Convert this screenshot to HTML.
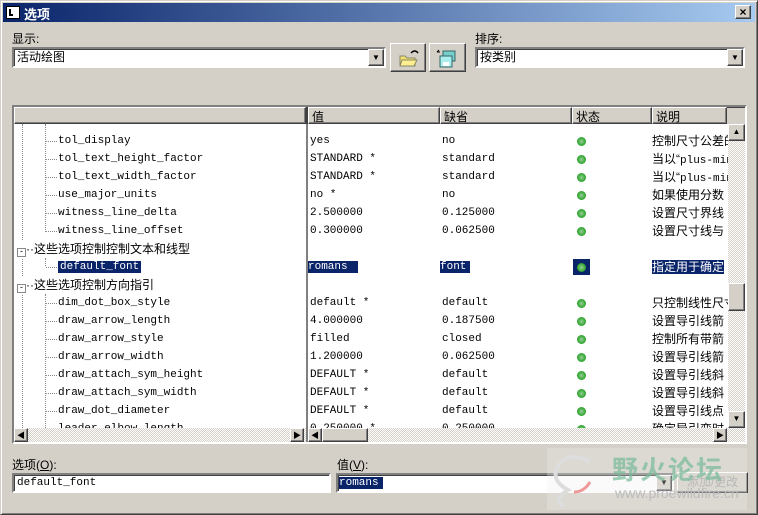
<!DOCTYPE html>
<html><head><meta charset="utf-8"><style>
*{box-sizing:border-box;margin:0;padding:0}
body{width:758px;height:515px;background:#d4d0c8;font-family:"Liberation Sans","Noto Sans CJK SC",sans-serif;font-size:12px;color:#000;position:relative;overflow:hidden}
.a{position:absolute}
.sunk{border:2px solid;border-color:#808080 #fff #fff #808080;box-shadow:inset 1px 1px 0 #404040;background:#fff}
.btn{border:1px solid;border-color:#fff #404040 #404040 #fff;box-shadow:inset -1px -1px 0 #808080;background:#d4d0c8}
.mono{font-family:"Liberation Mono","Noto Sans CJK SC",monospace;font-size:11px}
.row{position:absolute;left:0;height:18px;line-height:18px;white-space:nowrap}
.leaf{position:absolute;left:31px;height:18px;line-height:18px;white-space:nowrap;padding-left:13px}
.leaf::before{content:"";position:absolute;left:1px;top:9px;width:11px;border-top:1px dotted #888}
.dot{position:absolute;width:9px;height:9px;border-radius:50%;background:radial-gradient(circle,#9c9 0,#3a3 60%,#262 100%)}
.track{background:repeating-conic-gradient(#d4d0c8 0 25%,#fff 0 50%) 0 0/2px 2px}
.arr{font-size:8px;text-align:center;line-height:14px}
.box{display:inline-block;width:9px;height:9px;border:1px solid #888;background:#fff;line-height:5px;font-size:9px;text-align:center;vertical-align:-1px}
</style></head><body>
<div class="a" style="left:0;top:0;width:758px;height:515px;border:1px solid;border-color:#d4d0c8 #404040 #404040 #d4d0c8;box-shadow:inset 1px 1px 0 #fff,inset -1px -1px 0 #808080"></div>
<div class="a" style="left:3px;top:3px;width:752px;height:19px;background:linear-gradient(90deg,#0a246a,#a6caf0)"></div>
<div class="a" style="left:6px;top:6px;width:14px;height:13px;background:#fff;border:1px solid #000"><div class="a" style="left:2px;top:2px;width:4px;height:7px;border-left:2px solid #000;border-bottom:2px solid #000"></div></div>
<div class="a" style="left:24px;top:4px;color:#fff;font-weight:bold;font-size:13px">选项</div>
<div class="a btn" style="left:735px;top:5px;width:16px;height:14px;font-size:12px;line-height:12px;text-align:center;font-weight:bold">×</div>

<div class="a" style="left:12px;top:30px">显示:</div>
<div class="a sunk" style="left:12px;top:47px;width:374px;height:21px;padding-left:3px;line-height:16px">活动绘图</div>
<div class="a btn arr" style="left:368px;top:49px;width:16px;height:17px;line-height:16px">▼</div>
<div class="a btn" style="left:390px;top:43px;width:36px;height:29px"><svg width="34" height="27"><path d="M9 12h5l2 2h8v8H9z" fill="#f0e070" stroke="#886" stroke-width="1"/><path d="M11 16h15l-3 6H9z" fill="#ffef90" stroke="#886"/><path d="M20 9q4-4 7 0" fill="none" stroke="#000" stroke-width="1.5"/></svg></div>
<div class="a btn" style="left:429px;top:43px;width:37px;height:29px"><svg width="35" height="27"><rect x="13" y="7" width="12" height="10" fill="#7cc" stroke="#366"/><rect x="10" y="12" width="12" height="11" fill="#aee" stroke="#366"/><rect x="13" y="18" width="6" height="4" fill="#fff"/><path d="M10 8h-3m0 0l2-2" stroke="#000" fill="none"/></svg></div>
<div class="a" style="left:475px;top:30px">排序:</div>
<div class="a sunk" style="left:475px;top:47px;width:270px;height:21px;padding-left:3px;line-height:16px">按类别</div>
<div class="a btn arr" style="left:727px;top:49px;width:16px;height:17px;line-height:16px">▼</div>

<div class="a sunk" style="left:12px;top:105px;width:735px;height:339px;background:#d4d0c8"></div>
<div class="a" style="left:14px;top:107px;width:713px;height:17px;background:#d4d0c8">
 <div class="a btn" style="left:0;top:0;width:292px;height:17px"></div>
 <div class="a" style="left:292px;top:0;width:2px;height:17px;background:#404040"></div>
 <div class="a btn" style="left:294px;top:0;width:132px;height:17px;padding-left:3px">值</div>
 <div class="a btn" style="left:426px;top:0;width:132px;height:17px;padding-left:3px">缺省</div>
 <div class="a btn" style="left:558px;top:0;width:80px;height:17px;padding-left:3px">状态</div>
 <div class="a btn" style="left:638px;top:0;width:75px;height:17px;padding-left:3px">说明</div>
</div>
<div class="a" style="left:14px;top:124px;width:292px;height:304px;background:#fff;overflow:hidden">
 <div class="a" style="left:8px;top:0;height:304px;border-left:1px dotted #888"></div>
 <div class="a" style="left:31px;top:0;height:108px;border-left:1px dotted #888"></div>
 <div class="a" style="left:31px;top:134px;height:8px;border-left:1px dotted #888"></div>
 <div class="a" style="left:31px;top:170px;height:140px;border-left:1px dotted #888"></div>
 <div class="mono" style="position:absolute;left:0;top:8px;width:292px">
  <div class="leaf" style="top:0">tol_display</div>
  <div class="leaf" style="top:18px">tol_text_height_factor</div>
  <div class="leaf" style="top:36px">tol_text_width_factor</div>
  <div class="leaf" style="top:54px">use_major_units</div>
  <div class="leaf" style="top:72px">witness_line_delta</div>
  <div class="leaf" style="top:90px">witness_line_offset</div>
  <div class="row" style="top:108px;left:3px;font-family:'Liberation Sans','Noto Sans CJK SC',sans-serif;font-size:12px;background:#fff"><span class="box">-</span>··这些选项控制控制文本和线型</div>
  <div class="leaf" style="top:126px"><span style="background:#0a246a;color:#fff;padding:0 2px">default_font</span></div>
  <div class="row" style="top:144px;left:3px;font-family:'Liberation Sans','Noto Sans CJK SC',sans-serif;font-size:12px;background:#fff"><span class="box">-</span>··这些选项控制方向指引</div>
  <div class="leaf" style="top:162px">dim_dot_box_style</div>
  <div class="leaf" style="top:180px">draw_arrow_length</div>
  <div class="leaf" style="top:198px">draw_arrow_style</div>
  <div class="leaf" style="top:216px">draw_arrow_width</div>
  <div class="leaf" style="top:234px">draw_attach_sym_height</div>
  <div class="leaf" style="top:252px">draw_attach_sym_width</div>
  <div class="leaf" style="top:270px">draw_dot_diameter</div>
  <div class="leaf" style="top:288px">leader_elbow_length</div>
 </div>
</div>
<div class="a" style="left:306px;top:124px;width:2px;height:318px;background:#808080"></div>
<div class="a" style="left:308px;top:124px;width:420px;height:304px;background:#fff;overflow:hidden">
 <div class="mono" style="position:absolute;left:0;top:8px">
  <div class="row" style="top:0"><span class="a" style="left:2px">yes</span><span class="a" style="left:134px">no</span></div>
  <div class="row" style="top:18px"><span class="a" style="left:2px">STANDARD *</span><span class="a" style="left:134px">standard</span></div>
  <div class="row" style="top:36px"><span class="a" style="left:2px">STANDARD *</span><span class="a" style="left:134px">standard</span></div>
  <div class="row" style="top:54px"><span class="a" style="left:2px">no *</span><span class="a" style="left:134px">no</span></div>
  <div class="row" style="top:72px"><span class="a" style="left:2px">2.500000</span><span class="a" style="left:134px">0.125000</span></div>
  <div class="row" style="top:90px"><span class="a" style="left:2px">0.300000</span><span class="a" style="left:134px">0.062500</span></div>
  <div class="row" style="top:126px"><span class="a" style="left:0;background:#0a246a;color:#fff;width:50px;line-height:12px;top:3px">romans</span><span class="a" style="left:132px;background:#0a246a;color:#fff;width:30px;line-height:12px;top:3px">font</span></div>
  <div class="row" style="top:162px"><span class="a" style="left:2px">default *</span><span class="a" style="left:134px">default</span></div>
  <div class="row" style="top:180px"><span class="a" style="left:2px">4.000000</span><span class="a" style="left:134px">0.187500</span></div>
  <div class="row" style="top:198px"><span class="a" style="left:2px">filled</span><span class="a" style="left:134px">closed</span></div>
  <div class="row" style="top:216px"><span class="a" style="left:2px">1.200000</span><span class="a" style="left:134px">0.062500</span></div>
  <div class="row" style="top:234px"><span class="a" style="left:2px">DEFAULT *</span><span class="a" style="left:134px">default</span></div>
  <div class="row" style="top:252px"><span class="a" style="left:2px">DEFAULT *</span><span class="a" style="left:134px">default</span></div>
  <div class="row" style="top:270px"><span class="a" style="left:2px">DEFAULT *</span><span class="a" style="left:134px">default</span></div>
  <div class="row" style="top:288px"><span class="a" style="left:2px">0.250000 *</span><span class="a" style="left:134px">0.250000</span></div>
 </div>
 <div class="a" style="left:265px;top:135px;width:17px;height:16px;background:#0a246a"></div>
 <div class="dot" style="left:269px;top:13px"></div><div class="dot" style="left:269px;top:31px"></div><div class="dot" style="left:269px;top:49px"></div><div class="dot" style="left:269px;top:67px"></div><div class="dot" style="left:269px;top:85px"></div><div class="dot" style="left:269px;top:103px"></div><div class="dot" style="left:269px;top:139px"></div><div class="dot" style="left:269px;top:175px"></div><div class="dot" style="left:269px;top:193px"></div><div class="dot" style="left:269px;top:211px"></div><div class="dot" style="left:269px;top:229px"></div><div class="dot" style="left:269px;top:247px"></div><div class="dot" style="left:269px;top:265px"></div><div class="dot" style="left:269px;top:283px"></div><div class="dot" style="left:269px;top:301px"></div>
 <div style="position:absolute;left:344px;top:8px;font-size:12px;white-space:nowrap">
  <div class="row" style="top:0">控制尺寸公差的</div>
  <div class="row" style="top:18px">当以“<span class="mono">plus-minus</span></div>
  <div class="row" style="top:36px">当以“<span class="mono">plus-minus</span></div>
  <div class="row" style="top:54px">如果使用分数</div>
  <div class="row" style="top:72px">设置尺寸界线</div>
  <div class="row" style="top:90px">设置尺寸线与</div>
  <div class="row" style="top:126px"><span style="background:#0a246a;color:#fff">指定用于确定</span></div>
  <div class="row" style="top:162px">只控制线性尺寸</div>
  <div class="row" style="top:180px">设置导引线箭</div>
  <div class="row" style="top:198px">控制所有带箭</div>
  <div class="row" style="top:216px">设置导引线箭</div>
  <div class="row" style="top:234px">设置导引线斜</div>
  <div class="row" style="top:252px">设置导引线斜</div>
  <div class="row" style="top:270px">设置导引线点</div>
  <div class="row" style="top:288px">确定导引弯时</div>
 </div>
</div>
<div class="a track" style="left:728px;top:124px;width:17px;height:304px"></div>
<div class="a btn arr" style="left:728px;top:124px;width:17px;height:17px">▲</div>
<div class="a btn" style="left:728px;top:283px;width:17px;height:28px"></div>
<div class="a btn arr" style="left:728px;top:411px;width:17px;height:17px">▼</div>
<div class="a track" style="left:14px;top:428px;width:292px;height:14px"></div>
<div class="a btn arr" style="left:14px;top:428px;width:14px;height:14px">◀</div>
<div class="a btn arr" style="left:290px;top:428px;width:14px;height:14px">▶</div>
<div class="a track" style="left:308px;top:428px;width:437px;height:14px"></div>
<div class="a btn arr" style="left:308px;top:428px;width:14px;height:14px">◀</div>
<div class="a btn" style="left:322px;top:428px;width:46px;height:14px"></div>
<div class="a btn arr" style="left:713px;top:428px;width:14px;height:14px">▶</div>

<div class="a" style="left:12px;top:456px">选项(<u>O</u>):</div>
<div class="a sunk mono" style="left:12px;top:473px;width:319px;height:20px;padding-left:3px;line-height:16px">default_font</div>
<div class="a" style="left:337px;top:456px">值(<u>V</u>):</div>
<div class="a sunk mono" style="left:336px;top:473px;width:338px;height:20px;padding-left:1px;line-height:16px"><span style="background:#0a246a;color:#fff;padding-right:4px">romans</span></div>
<div class="a btn arr" style="left:656px;top:475px;width:16px;height:16px">▼</div>
<div class="a btn" style="left:677px;top:472px;width:71px;height:21px;text-align:center;line-height:19px;color:#a0a0a0">添加/更改</div>
<div class="a" style="left:547px;top:448px;width:200px;height:62px;background:rgba(240,240,240,.3)"></div>
<div class="a" style="left:612px;top:450px;font-size:26px;font-weight:bold;color:#7b9;opacity:.7;letter-spacing:2px">野火论坛</div>
<div class="a" style="left:615px;top:485px;font-size:14px;color:#bbb">www.proewildfire.cn</div>
<svg class="a" style="left:550px;top:452px" width="60" height="56"><path d="M40 10q-20-12-32 4q-8 14 10 24q-16 10 -4 16" fill="none" stroke="#ddd" stroke-width="4"/><path d="M40 30q-6 10-16 10" fill="none" stroke="#e99" stroke-width="3"/></svg>
</body></html>
